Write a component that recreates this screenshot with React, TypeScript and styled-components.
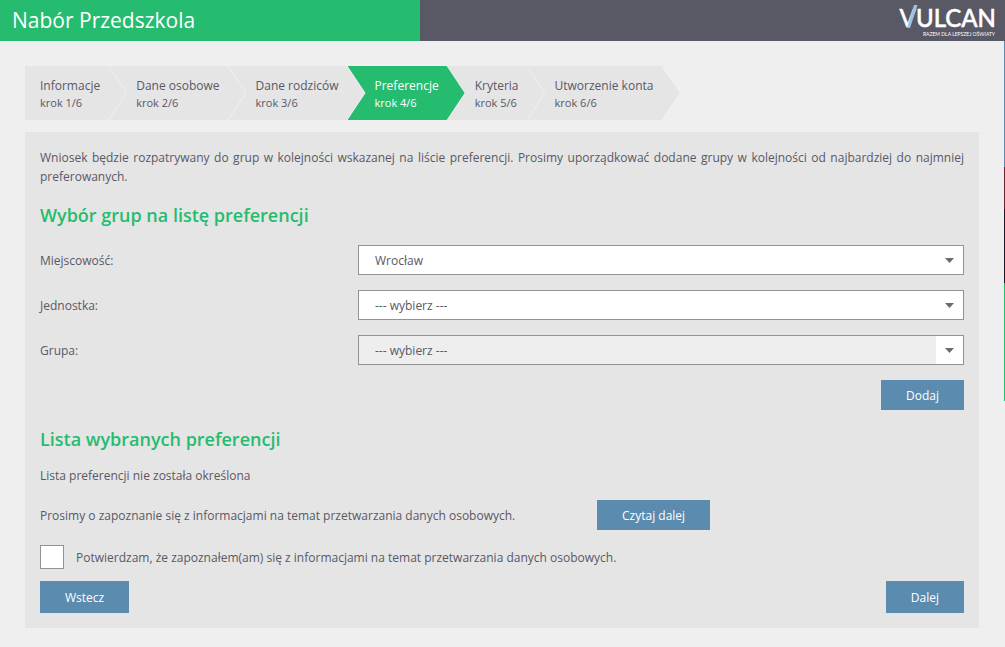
import React, { useState } from "react";
import styled, { createGlobalStyle } from "styled-components";

const GlobalStyle = createGlobalStyle`
  *, *::before, *::after { box-sizing: border-box; }
  body {
    margin: 0;
    background: #efefef;
    color: #595865;
    font: 12px/19px "Open Sans", "Noto Sans", sans-serif;
  }
  h1, h2, p, ol { margin: 0; padding: 0; }
`;

const Header = styled.header`
  display: flex;
  height: 41px;
`;

const Title = styled.h1`
  width: 420px;
  padding-left: 12px;
  background: #25bc6f;
  color: #fff;
  font-size: 21px;
  font-weight: 400;
  line-height: 40px;
`;

const Brand = styled.div`
  display: flex;
  flex: 1;
  justify-content: flex-end;
  padding-right: 8px;
  background: #595865;
`;

const Body = styled.div`
  display: flex;
  align-items: flex-start;
`;

const Main = styled.main`
  flex: 1;
  min-width: 0;
  padding: 25px 25px 19px;
`;

const Edge = styled.div`
  display: flex;
  flex-direction: column;
  width: 1px;
`;

const EdgePart = styled.span<{ $height: number; $color: string }>`
  height: ${(p) => p.$height}px;
  background: ${(p) => p.$color};
`;

const Steps = styled.ol`
  display: flex;
  margin-bottom: 12px;
  list-style: none;
`;

const Step = styled.li<{ $active: boolean; $first: boolean }>`
  height: 54px;
  margin-right: -17px;
  padding: 11px 26px 0 ${(p) => (p.$first ? 15 : 27)}px;
  background: ${(p) => (p.$active ? "#25bc6f" : "#e5e5e5")};
  color: ${(p) => (p.$active ? "#fff" : "#595865")};
  white-space: nowrap;
  clip-path: polygon(
    0 0,
    calc(100% - 18px) 0,
    100% 50%,
    calc(100% - 18px) 100%,
    0 100%,
    ${(p) => (p.$first ? 0 : 18)}px 50%
  );
`;

const StepName = styled.span`
  display: block;
  font-size: 12px;
  line-height: 18px;
`;

const StepCount = styled.span`
  display: block;
  font-size: 11px;
  line-height: 16px;
`;

const Panel = styled.form`
  padding: 16px 15px 15px;
  background: #e5e5e5;
`;

const Intro = styled.p`
  text-align: justify;
`;

const Heading = styled.h2<{ $tight?: boolean }>`
  margin: 16px 0 ${(p) => (p.$tight ? 13 : 16)}px;
  color: #25bc6f;
  font-size: 18px;
  font-weight: 600;
  line-height: 27px;
`;

const Field = styled.div`
  display: grid;
  grid-template-columns: 318px minmax(0, 1fr);
  align-items: center;
  margin-bottom: 15px;
`;

const SelectBox = styled.div`
  position: relative;
`;

const Select = styled.select`
  appearance: none;
  display: block;
  width: 100%;
  height: 30px;
  padding: 0 36px 0 16px;
  border: 1px solid #929292;
  border-radius: 0;
  background: #fff;
  color: #595865;
  font: inherit;
  &:disabled {
    background: #eee;
    opacity: 1;
  }
`;

const Arrow = styled.span`
  position: absolute;
  top: 1px;
  right: 1px;
  bottom: 1px;
  display: flex;
  align-items: center;
  justify-content: center;
  width: 27px;
  background: #fff;
  pointer-events: none;
`;

const Actions = styled.div<{ $spread?: boolean }>`
  display: flex;
  justify-content: ${(p) => (p.$spread ? "space-between" : "flex-end")};
`;

const Button = styled.button<{ $tall?: boolean }>`
  height: ${(p) => (p.$tall ? 32 : 30)}px;
  padding: 0 25px;
  border: 0;
  background: #5b8baf;
  color: #fff;
  font: inherit;
  cursor: pointer;
`;

const Empty = styled.p`
  margin-bottom: 15px;
`;

const Notice = styled.div`
  display: grid;
  grid-template-columns: 557px auto;
  align-items: center;
  justify-content: start;
  margin-bottom: 15px;
`;

const Consent = styled.label`
  display: flex;
  align-items: center;
  gap: 12px;
  margin-bottom: 12px;
`;

const Checkbox = styled.input`
  appearance: none;
  flex: none;
  width: 24px;
  height: 24px;
  margin: 0;
  border: 1px solid #929292;
  background: #fff;
  &:checked {
    background: #5b8baf;
    box-shadow: inset 0 0 0 4px #fff;
  }
`;

const steps = [
  "Informacje",
  "Dane osobowe",
  "Dane rodziców",
  "Preferencje",
  "Kryteria",
  "Utworzenie konta",
];

const fields = [
  { id: "city", label: "Miejscowość:", value: "Wrocław", disabled: false },
  { id: "unit", label: "Jednostka:", value: "--- wybierz ---", disabled: false },
  { id: "group", label: "Grupa:", value: "--- wybierz ---", disabled: true },
];

const edgeParts = [
  { height: 126, color: "#5b8baf" },
  { height: 42, color: "#6b2330" },
  { height: 74, color: "#1c1825" },
  { height: 118, color: "#25bc6f" },
];

function Logo() {
  return (
    <svg width="100" height="41" viewBox="0 0 100 41" role="img" aria-label="Vulcan">
      <g fill="#fff" fontFamily="Lato, sans-serif" textAnchor="end">
        <text x="99" y="27" fontSize="24" fontWeight="500" stroke="#fff" strokeWidth="0.5">
          VULCAN
        </text>
        <text x="98" y="36" fontSize="5" fontWeight="400">
          RAZEM DLA LEPSZEJ OŚWIATY
        </text>
      </g>
      <path d="M10 28h3L20.500 5h-3.500Z" fill="#9fc3dc" />
    </svg>
  );
}

export default function App() {
  const [accepted, setAccepted] = useState(false);
  return (
    <>
      <GlobalStyle />
      <Header>
        <Title>Nabór Przedszkola</Title>
        <Brand>
          <Logo />
        </Brand>
      </Header>
      <Body>
        <Main>
          <Steps>
            {steps.map((name, i) => (
              <Step key={name} $active={i === 3} $first={i === 0}>
                <StepName>{name}</StepName>
                <StepCount>krok {i + 1}/6</StepCount>
              </Step>
            ))}
          </Steps>
          <Panel onSubmit={(e) => e.preventDefault()}>
            <Intro>
              Wniosek będzie rozpatrywany do grup w kolejności wskazanej na liście
              preferencji. Prosimy uporządkować dodane grupy w kolejności od
              najbardziej do najmniej preferowanych.
            </Intro>
            <Heading>Wybór grup na listę preferencji</Heading>
            {fields.map((f) => (
              <Field key={f.id}>
                <label htmlFor={f.id}>{f.label}</label>
                <SelectBox>
                  <Select id={f.id} disabled={f.disabled}>
                    <option>{f.value}</option>
                  </Select>
                  <Arrow>
                    <svg width="9" height="5" viewBox="0 0 9 5" aria-hidden="true">
                      <path d="M0 0h9L4.500 5Z" fill="#6b6b6b" />
                    </svg>
                  </Arrow>
                </SelectBox>
              </Field>
            ))}
            <Actions>
              <Button type="button">Dodaj</Button>
            </Actions>
            <Heading $tight>Lista wybranych preferencji</Heading>
            <Empty>Lista preferencji nie została określona</Empty>
            <Notice>
              <p>
                Prosimy o zapoznanie się z informacjami na temat przetwarzania danych
                osobowych.
              </p>
              <Button type="button">Czytaj dalej</Button>
            </Notice>
            <Consent>
              <Checkbox
                type="checkbox"
                checked={accepted}
                onChange={(e) => setAccepted(e.target.checked)}
              />
              Potwierdzam, że zapoznałem(am) się z informacjami na temat przetwarzania
              danych osobowych.
            </Consent>
            <Actions $spread>
              <Button type="button" $tall>Wstecz</Button>
              <Button type="submit" $tall>Dalej</Button>
            </Actions>
          </Panel>
        </Main>
        <Edge aria-hidden="true">
          {edgeParts.map((p) => (
            <EdgePart key={p.color} $height={p.height} $color={p.color} />
          ))}
        </Edge>
      </Body>
    </>
  );
}
